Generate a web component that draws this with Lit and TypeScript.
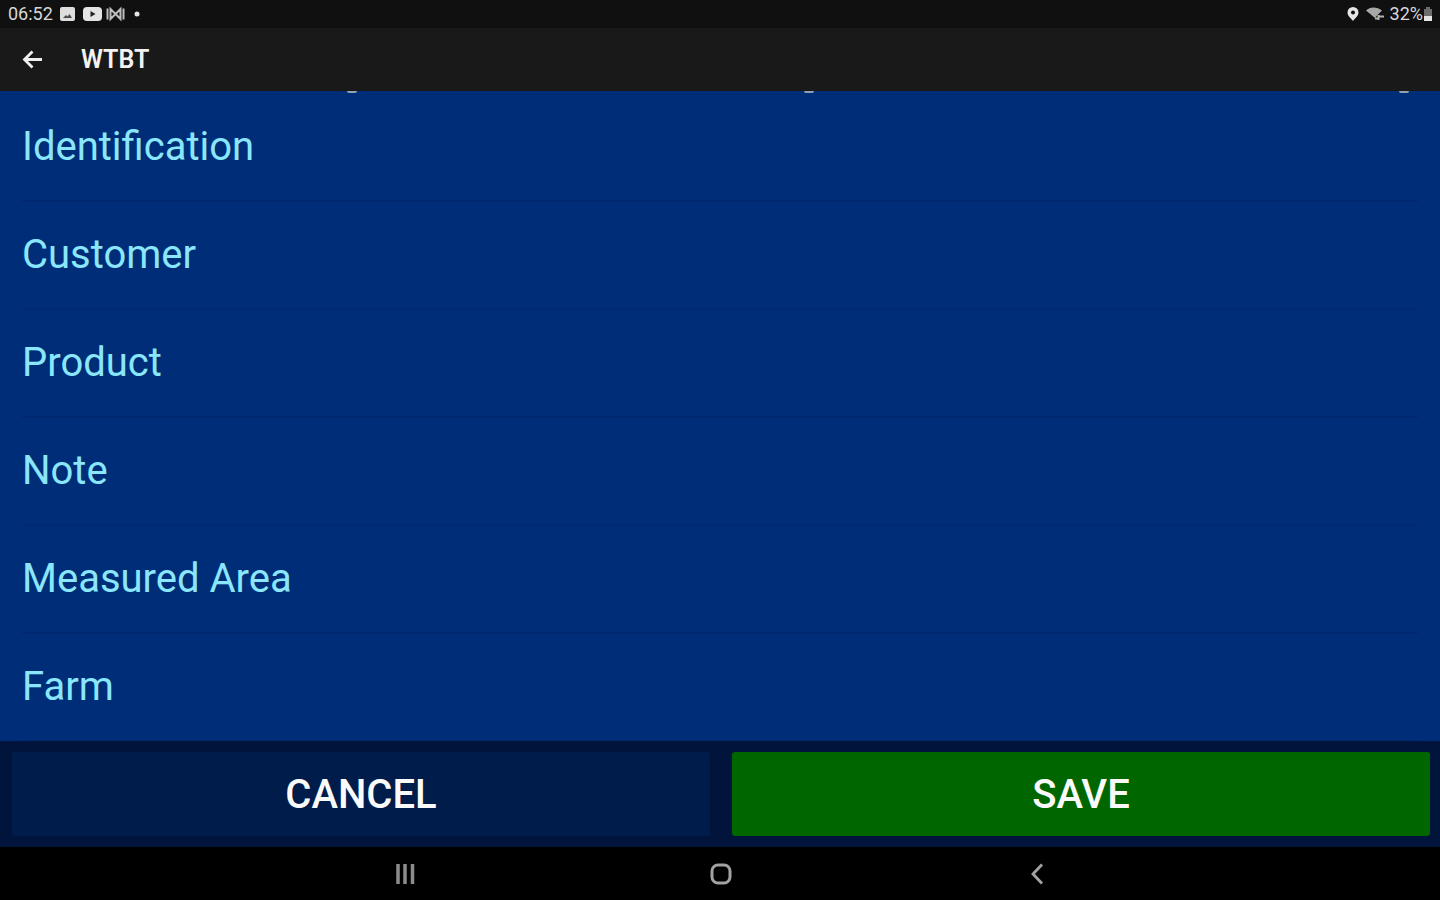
import { LitElement, html, css } from "lit";
import { customElement, property } from "lit/decorators.js";

@customElement("status-bar")
class StatusBar extends LitElement {
  static styles = css`
    :host {
      display: flex;
      justify-content: space-between;
      align-items: center;
      height: 28px;
      padding: 0 7px 0 8px;
      background: #101010;
      color: #d8d8d8;
      font-size: 18px;
      line-height: 28px;
    }
    .group {
      display: flex;
      align-items: center;
      gap: 6px;
    }
    .tight {
      gap: 1px;
    }
    svg {
      display: block;
    }
    .power {
      display: flex;
      align-items: center;
    }
  `;

  render() {
    return html`
      <div class="group">
        <span>06:52</span>
        <svg width="18" height="16" viewBox="0 0 18 16" aria-hidden="true">
          <rect x="1" y="1" width="15" height="14" rx="2" fill="#dedede" />
          <path d="M4 12 L7 9 L8.500 10.500 L10.500 8 L13 12 Z" fill="#4a4a4a" />
        </svg>
        <div class="group tight">
          <svg width="22" height="16" viewBox="0 0 22 16" aria-hidden="true">
            <rect x="0" y="1" width="19" height="14" rx="4" fill="#e4e4e4" />
            <path d="M7.500 5 L12.500 8 L7.500 11 Z" fill="#222" />
          </svg>
          <svg width="22" height="16" viewBox="0 0 22 16" aria-hidden="true">
            <path d="M1.500 2.500 V13.500 M17.500 2.500 V13.500 M4.500 3 L9.500 8 L14.500 3 V13 L9.500 8 L4.500 13 Z" fill="none" stroke="#bdbdbd" stroke-width="2" />
          </svg>
        </div>
        <svg width="8" height="8" viewBox="0 0 8 8" aria-hidden="true">
          <circle cx="3" cy="4" r="2.500" fill="#e4e4e4" />
        </svg>
      </div>
      <div class="group">
        <svg width="14" height="16" viewBox="0 0 14 16" aria-hidden="true">
          <path fill-rule="evenodd" d="M7 1 A5.500 5.500 0 0 1 12.500 6.500 C12.500 10 9 12 7 15 C5 12 1.500 10 1.500 6.500 A5.500 5.500 0 0 1 7 1 Z M7 4.500 A2 2 0 1 0 7 8.500 A2 2 0 1 0 7 4.500 Z" fill="#e6e6e6" />
        </svg>
        <svg width="18" height="16" viewBox="0 0 18 16" aria-hidden="true">
          <path d="M0 4.500 C4 0.500 11 0.500 16 4.500 L12 8.500 L9 12 Z" fill="#a8a8a8" />
          <path d="M9 12.500 H13 M12.500 9 V14 M13.500 10.500 H18" fill="none" stroke="#b4b4b4" stroke-width="2" />
        </svg>
        <div class="power">
          <span>32%</span>
          <svg width="10" height="16" viewBox="0 0 10 16" aria-hidden="true">
            <path d="M3 1 H7 V3 H9 V15 H1 V3 H3 Z" fill="#6c6c6c" />
            <path d="M1 10 H9 V15 H1 Z" fill="#e4e4e4" />
          </svg>
        </div>
      </div>
    `;
  }
}

@customElement("field-row")
class FieldRow extends LitElement {
  @property() label = "";

  static styles = css`
    :host {
      display: block;
      flex: none;
      padding: 0 22px;
    }
    .field {
      display: block;
      width: 100%;
      height: 108px;
      box-sizing: border-box;
      padding: 0;
      border: 0;
      border-bottom: 2px solid #002870;
      background: none;
      color: #8ae6fa;
      font: inherit;
      font-size: 40px;
      line-height: 48px;
      text-align: left;
    }
  `;

  render() {
    return html`<button class="field" type="button">${this.label}</button>`;
  }
}

@customElement("app-root")
class AppRoot extends LitElement {
  private fields = ["Identification", "Customer", "Product", "Note", "Measured Area", "Farm"];

  static styles = css`
    :host {
      display: flex;
      flex-direction: column;
      height: 100vh;
      overflow: hidden;
      background: #000;
      font-family: Roboto, "Noto Sans", sans-serif;
    }
    .appbar {
      display: flex;
      align-items: center;
      gap: 36px;
      height: 63px;
      padding: 0 20px;
      background: #191919;
      color: #f2f2f2;
    }
    .title {
      margin: 0;
      font-size: 25px;
      line-height: 32px;
      font-weight: 600;
    }
    .plain {
      display: block;
      padding: 0;
      border: 0;
      background: none;
    }
    svg {
      display: block;
    }
    .list {
      display: flex;
      flex-direction: column;
      flex: 1;
      min-height: 0;
      overflow: hidden;
      background: #002d78;
    }
    .tails {
      display: grid;
      grid-template-columns: 357fr 457fr 595fr;
      justify-items: end;
      flex: none;
      height: 3px;
      padding-right: 31px;
    }
    .tail {
      width: 10px;
      height: 2px;
      border-radius: 0 0 5px 5px;
      background: #8fa3b4;
    }
    .actions {
      display: grid;
      grid-template-columns: 1fr 1fr;
      gap: 22px;
      padding: 11px 10px 11px 12px;
      background: #00143c;
    }
    .action {
      height: 84px;
      padding: 2px 0 0;
      border: 0;
      border-radius: 3px;
      color: #fafafa;
      font: inherit;
      font-size: 40px;
      line-height: 48px;
      font-weight: 500;
    }
    .cancel {
      background: #001c4b;
    }
    .save {
      background: #006600;
    }
    .nav {
      display: flex;
      justify-content: center;
      align-items: center;
      gap: 284px;
      height: 53px;
      background: #000;
    }
  `;

  render() {
    return html`
      <status-bar></status-bar>
      <header class="appbar">
        <button class="plain" type="button" aria-label="Back">
          <svg width="25" height="24" viewBox="0 0 25 24">
            <path d="M22 11.500 H5 M12.500 3.500 L4.500 11.500 L12.500 19.500" fill="none" stroke="#efefef" stroke-width="2.800" />
          </svg>
        </button>
        <h1 class="title">WTBT</h1>
      </header>
      <main class="list">
        <div class="tails" aria-hidden="true">
          <span class="tail"></span><span class="tail"></span><span class="tail"></span>
        </div>
        ${this.fields.map((name) => html`<field-row .label=${name}></field-row>`)}
      </main>
      <div class="actions">
        <button class="action cancel" type="button">CANCEL</button>
        <button class="action save" type="button">SAVE</button>
      </div>
      <nav class="nav">
        <button class="plain" type="button" aria-label="Recent apps">
          <svg width="32" height="32" viewBox="0 0 32 32">
            <path d="M10 6 V26 M17 6 V26 M24.500 6 V26" stroke="#8c8c8c" stroke-width="3.500" />
          </svg>
        </button>
        <button class="plain" type="button" aria-label="Home">
          <svg width="32" height="32" viewBox="0 0 32 32">
            <rect x="8" y="7" width="18" height="18" rx="6" fill="none" stroke="#a2a2a2" stroke-width="3" />
          </svg>
        </button>
        <button class="plain" type="button" aria-label="Back">
          <svg width="32" height="32" viewBox="0 0 32 32">
            <path d="M22 6.500 L13 16 L22 25.500" fill="none" stroke="#a2a2a2" stroke-width="2.800" />
          </svg>
        </button>
      </nav>
    `;
  }
}
